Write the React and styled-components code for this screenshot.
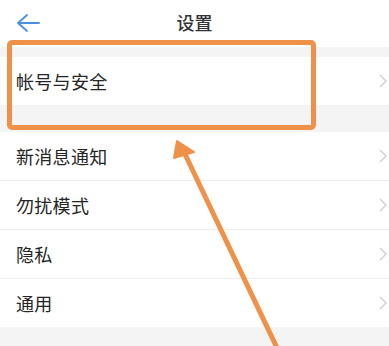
import React from "react";
import styled, { createGlobalStyle } from "styled-components";

const Global = createGlobalStyle`
  html, body { margin: 0; padding: 0; background: #f4f4f4; }
  body { font-family: "Noto Sans CJK SC", "Noto Sans", sans-serif; }
  #root { width: 389px; height: 346px; overflow: hidden; }
`;

const Page = styled.div`
  position: relative;
  width: 389px;
  height: 346px;
  background: #f4f4f4;
  display: flex;
  flex-direction: column;
`;

const Header = styled.div`
  height: 47px;
  background: #ffffff;
  display: grid;
  grid-template-columns: 60px 1fr 60px;
  align-items: center;
`;

const BackButton = styled.div`
  padding-left: 16px;
  display: flex;
  align-items: center;
  padding-bottom: 2px;
`;

const Title = styled.div`
  text-align: center;
  font-size: 18px;
  font-weight: 500;
  color: #333;
  padding-bottom: 4px;
`;

const Group = styled.div`
  background: #ffffff;
  margin-top: ${(p) => p.$gap}px;
  display: flex;
  flex-direction: column;
`;

const Row = styled.div`
  height: 48px;
  display: flex;
  align-items: center;
  justify-content: space-between;
  padding: 0 2px 0 16px;
  border-top: ${(p) => (p.$first ? "none" : "1px solid #eeeeee")};
`;

const Label = styled.span`
  font-size: 18px;
  color: #252525;
  letter-spacing: 0.3px;
`;

const HighlightBox = styled.div`
  position: absolute;
  left: 7px;
  top: 40px;
  width: 299px;
  height: 80px;
  border: 5px solid #f0914a;
  border-radius: 5px;
`;

const ArrowLayer = styled.svg`
  position: absolute;
  left: 0;
  top: 0;
  pointer-events: none;
`;

const Chevron = () => (
  <svg width="8" height="14" viewBox="0 0 8 14">
    <path d="M1 1 L7 7 L1 13" fill="none" stroke="#cfcfcf" strokeWidth="1.4" />
  </svg>
);

const items = ["新消息通知", "勿扰模式", "隐私", "通用"];

export default function App() {
  return (
    <>
      <Global />
      <Page>
        <Header>
          <BackButton>
            <svg width="24" height="20" viewBox="0 0 24 20">
              <path d="M11 2 L2 10 L11 18 M2 10 L23 10" fill="none" stroke="#4a90e2" strokeWidth="1.8" strokeLinecap="round" strokeLinejoin="round" />
            </svg>
          </BackButton>
          <Title>设置</Title>
          <div />
        </Header>
        <Group $gap={10}>
          <Row $first>
            <Label>帐号与安全</Label>
            <Chevron />
          </Row>
        </Group>
        <Group $gap={27}>
          {items.map((t, i) => (
            <Row key={t} $first={i === 0}>
              <Label>{t}</Label>
              <Chevron />
            </Row>
          ))}
        </Group>
        <HighlightBox />
        <ArrowLayer width="389" height="346" viewBox="0 0 389 346">
          <line x1="184" y1="152" x2="278" y2="350" stroke="#f0914a" strokeWidth="5" />
          <polygon points="177,141 174,158 194,152" fill="#f0914a" stroke="#f0914a" strokeWidth="2" strokeLinejoin="round" />
        </ArrowLayer>
      </Page>
    </>
  );
}
